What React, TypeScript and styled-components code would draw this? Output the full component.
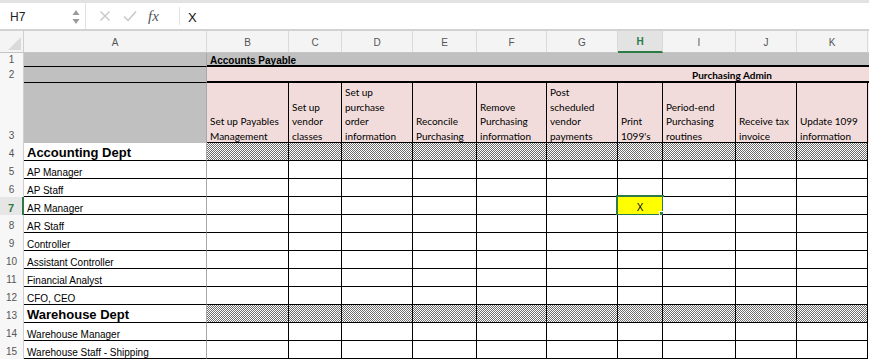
import React from "react";
import styled, { createGlobalStyle, css } from "styled-components";

const GlobalStyle = createGlobalStyle`
  html, body {
    margin: 0;
    padding: 0;
    background: #ffffff;
    overflow: hidden;
  }
  body {
    font-family: "Liberation Sans", Arial, sans-serif;
  }
`;

const COLUMNS = ["A", "B", "C", "D", "E", "F", "G", "H", "I", "J", "K"];
const WIDTHS = [24, 183, 82, 53, 71, 64, 70, 71, 45, 73, 61, 71];
const TASKS = [
  "Set up Payables Management",
  "Set up vendor classes",
  "Set up purchase order information",
  "Reconcile Purchasing",
  "Remove Purchasing information",
  "Post scheduled vendor payments",
  "Print 1099's",
  "Period-end Purchasing routines",
  "Receive tax invoice",
  "Update 1099 information",
];

type RowKind = "dept" | "role";
const ROWS: { n: number; label: string; kind: RowKind }[] = [
  { n: 4, label: "Accounting Dept", kind: "dept" },
  { n: 5, label: "AP Manager", kind: "role" },
  { n: 6, label: "AP Staff", kind: "role" },
  { n: 7, label: "AR Manager", kind: "role" },
  { n: 8, label: "AR Staff", kind: "role" },
  { n: 9, label: "Controller", kind: "role" },
  { n: 10, label: "Assistant Controller", kind: "role" },
  { n: 11, label: "Financial Analyst", kind: "role" },
  { n: 12, label: "CFO, CEO", kind: "role" },
  { n: 13, label: "Warehouse Dept", kind: "dept" },
  { n: 14, label: "Warehouse Manager", kind: "role" },
  { n: 15, label: "Warehouse Staff - Shipping", kind: "role" },
];

const GREEN = "#2c7a45";

const Page = styled.div`
  display: flex;
  flex-direction: column;
  width: 869px;
  height: 359px;
  overflow: hidden;
`;

const FormulaBar = styled.div`
  display: flex;
  align-items: stretch;
  height: 31px;
  box-sizing: border-box;
  background: #ffffff;
  border-top: 3px solid #e2e2e2;
  border-bottom: 2px solid #d2d2d2;
`;

const NameBox = styled.div`
  display: flex;
  align-items: center;
  justify-content: space-between;
  width: 86px;
  box-sizing: border-box;
  padding: 2px 5px 0 10px;
  border-right: 1px solid #e0e0e0;
  font-size: 12px;
  color: #222;
`;

const Tools = styled.div`
  display: flex;
  align-items: center;
  padding-left: 9px;
  width: 84px;
  border-right: 1px solid #e4e4e4;
  margin: 4px 0;
`;

const ToolIcon = styled.span<{ $w: number }>`
  display: flex;
  align-items: center;
  justify-content: center;
  width: ${(p) => p.$w}px;
`;

const Fx = styled.span`
  font-family: "Liberation Serif", "Times New Roman", serif;
  font-style: italic;
  font-size: 15px;
  color: #555;
  margin-left: 3px;
`;

const FormulaValue = styled.div`
  display: flex;
  align-items: center;
  padding: 2px 0 0 8px;
  font-size: 13px;
  color: #111;
`;

const Sheet = styled.div`
  display: grid;
  grid-template-columns: ${WIDTHS.map((w) => `${w}px`).join(" ")} 1fr;
  grid-template-rows: 22px 14px 16px 60px repeat(12, 18px);
`;

const Corner = styled.div`
  position: relative;
  background: #f4f4f4;
  border-right: 1px solid #cfcfcf;
  border-bottom: 1px solid #c4c4c4;
  box-sizing: border-box;
  &::after {
    content: "";
    position: absolute;
    right: 2px;
    bottom: 2px;
    border-style: solid;
    border-width: 0 0 13px 13px;
    border-color: transparent transparent #dadada transparent;
  }
`;

const ColHeader = styled.div<{ $active?: boolean }>`
  display: flex;
  align-items: center;
  justify-content: center;
  box-sizing: border-box;
  font-size: 10px;
  padding-top: 1px;
  color: #555;
  background: #f4f4f4;
  border-right: 1px solid #dadada;
  border-bottom: 1px solid #c4c4c4;
  ${(p) =>
    p.$active &&
    css`
      background: #e3e3e3;
      color: ${GREEN};
      font-weight: bold;
      border-bottom: 2px solid ${GREEN};
    `}
`;

const RowHeader = styled.div<{ $active?: boolean; $middle?: boolean }>`
  display: flex;
  align-items: ${(p) => (p.$middle ? "center" : "flex-end")};
  justify-content: center;
  box-sizing: border-box;
  padding-bottom: ${(p) => (p.$middle ? "0" : "2px")};
  font-size: 10px;
  line-height: 10px;
  color: #555;
  background: #f7f7f7;
  border-right: 1px solid #cfcfcf;
  ${(p) =>
    p.$active &&
    css`
      color: ${GREEN};
      font-weight: bold;
      font-size: 11px;
      background: #e6e6e6;
      border-right: 2px solid ${GREEN};
    `}
`;

type Fill = "gray" | "pink" | "white" | "pattern" | "yellow";
type Edge = "none" | "grid" | "black" | "thick";

const fills: Record<Fill, string> = {
  gray: "background: #c0c0c0;",
  pink: "background: #f2dcdb;",
  white: "background: #ffffff;",
  pattern:
    "background: repeating-conic-gradient(#6e6e6e 0% 25%, #ffffff 0% 50%) 0 0 / 2px 2px;",
  yellow: "background: #ffff00;",
};

const edge = (e: Edge) =>
  e === "none"
    ? "0"
    : e === "grid"
      ? "1px solid #a8a8a8"
      : e === "black"
        ? "1px solid #000"
        : "2px solid #000";

const Cell = styled.div<{
  $fill: Fill;
  $right?: Edge;
  $bottom?: Edge;
  $span?: number;
  $middle?: boolean;
}>`
  position: relative;
  display: flex;
  align-items: ${(p) => (p.$middle ? "center" : "flex-end")};
  box-sizing: border-box;
  min-width: 0;
  padding: 0 0 0 3px;
  white-space: nowrap;
  font-size: 10px;
  line-height: 10px;
  color: #000;
  ${(p) => fills[p.$fill]}
  border-right: ${(p) => edge(p.$right ?? "none")};
  border-bottom: ${(p) => edge(p.$bottom ?? "none")};
  ${(p) => p.$span && `grid-column: span ${p.$span};`}
`;

const DeptLabel = styled.span`
  font-size: 13px;
  font-weight: bold;
  line-height: 14px;
`;

const SectionTitle = styled.span`
  font-weight: bold;
  font-size: 10px;
  line-height: 12px;
  margin-top: 3px;
`;

const AdminTitle = styled.span`
  font-family: Lato, "Open Sans", sans-serif;
  font-weight: bold;
  font-size: 10px;
  line-height: 15px;
  padding-left: 482px;
  margin-top: 2px;
`;

const TaskText = styled.span`
  font-family: Lato, "Open Sans", sans-serif;
  font-size: 10px;
  line-height: 14.5px;
  white-space: normal;
  padding-right: 3px;
  margin-bottom: -1px;
`;

const Mark = styled.span`
  flex: 1;
  text-align: center;
  font-size: 10px;
  margin: 0 0 1px -3px;
`;

const Selection = styled.div`
  position: absolute;
  left: -2px;
  top: -2px;
  right: -2px;
  bottom: -2px;
  border: 2px solid ${GREEN};
  pointer-events: none;
  &::after {
    content: "";
    position: absolute;
    right: -4px;
    bottom: -4px;
    width: 5px;
    height: 5px;
    background: ${GREEN};
    border: 1px solid #fff;
  }
`;

function Stepper() {
  return (
    <svg width="8" height="16" viewBox="0 0 8 16">
      <path d="M4 1 L7.5 6 L0.5 6 Z" fill="#9a9a9a" />
      <path d="M4 15 L7.5 10 L0.5 10 Z" fill="#9a9a9a" />
    </svg>
  );
}

function Cross() {
  return (
    <svg width="12" height="12" viewBox="0 0 12 12">
      <path d="M1.5 1.5 L10.5 10.5 M10.5 1.5 L1.5 10.5" stroke="#c6c6c6" strokeWidth="1.4" />
    </svg>
  );
}

function Check() {
  return (
    <svg width="14" height="12" viewBox="0 0 14 12">
      <path d="M1 6.5 L5 10.5 L13 1.5" stroke="#c6c6c6" strokeWidth="1.4" fill="none" />
    </svg>
  );
}

export default function App() {
  return (
    <Page>
      <GlobalStyle />
      <FormulaBar>
        <NameBox>
          <span>H7</span>
          <Stepper />
        </NameBox>
        <Tools>
          <ToolIcon $w={20}>
            <Cross />
          </ToolIcon>
          <ToolIcon $w={30}>
            <Check />
          </ToolIcon>
          <Fx>fx</Fx>
        </Tools>
        <FormulaValue>X</FormulaValue>
      </FormulaBar>

      <Sheet>
        <Corner />
        {COLUMNS.map((c) => (
          <ColHeader key={c} $active={c === "H"}>
            {c}
          </ColHeader>
        ))}
        <ColHeader />

        <RowHeader $middle>1</RowHeader>
        <Cell $fill="gray" $right="grid" $bottom="black" />
        <Cell $fill="gray" $bottom="thick" $span={11} $middle>
          <SectionTitle>Accounts Payable</SectionTitle>
        </Cell>

        <RowHeader $middle>2</RowHeader>
        <Cell $fill="gray" $right="grid" $bottom="black" />
        <Cell $fill="pink" $bottom="thick" $span={11} $middle>
          <AdminTitle>Purchasing Admin</AdminTitle>
        </Cell>

        <RowHeader>3</RowHeader>
        <Cell $fill="gray" $right="grid" />
        {TASKS.map((t) => (
          <Cell key={t} $fill="pink" $right="black" $bottom="black">
            <TaskText>{t}</TaskText>
          </Cell>
        ))}
        <Cell $fill="pink" />

        {ROWS.map((r) => (
          <React.Fragment key={r.n}>
            <RowHeader $active={r.n === 7}>{r.n}</RowHeader>
            <Cell $fill="white" $right="grid" $bottom="black">
              {r.kind === "dept" ? <DeptLabel>{r.label}</DeptLabel> : r.label}
            </Cell>
            {TASKS.map((t, i) => {
              const selected = r.n === 7 && i === 6;
              return (
                <Cell
                  key={t}
                  $fill={r.kind === "dept" ? "pattern" : selected ? "yellow" : "white"}
                  $right="black"
                  $bottom="black"
                >
                  {selected && (
                    <>
                      <Mark>X</Mark>
                      <Selection />
                    </>
                  )}
                </Cell>
              );
            })}
            <Cell $fill="white" />
          </React.Fragment>
        ))}
      </Sheet>
    </Page>
  );
}
